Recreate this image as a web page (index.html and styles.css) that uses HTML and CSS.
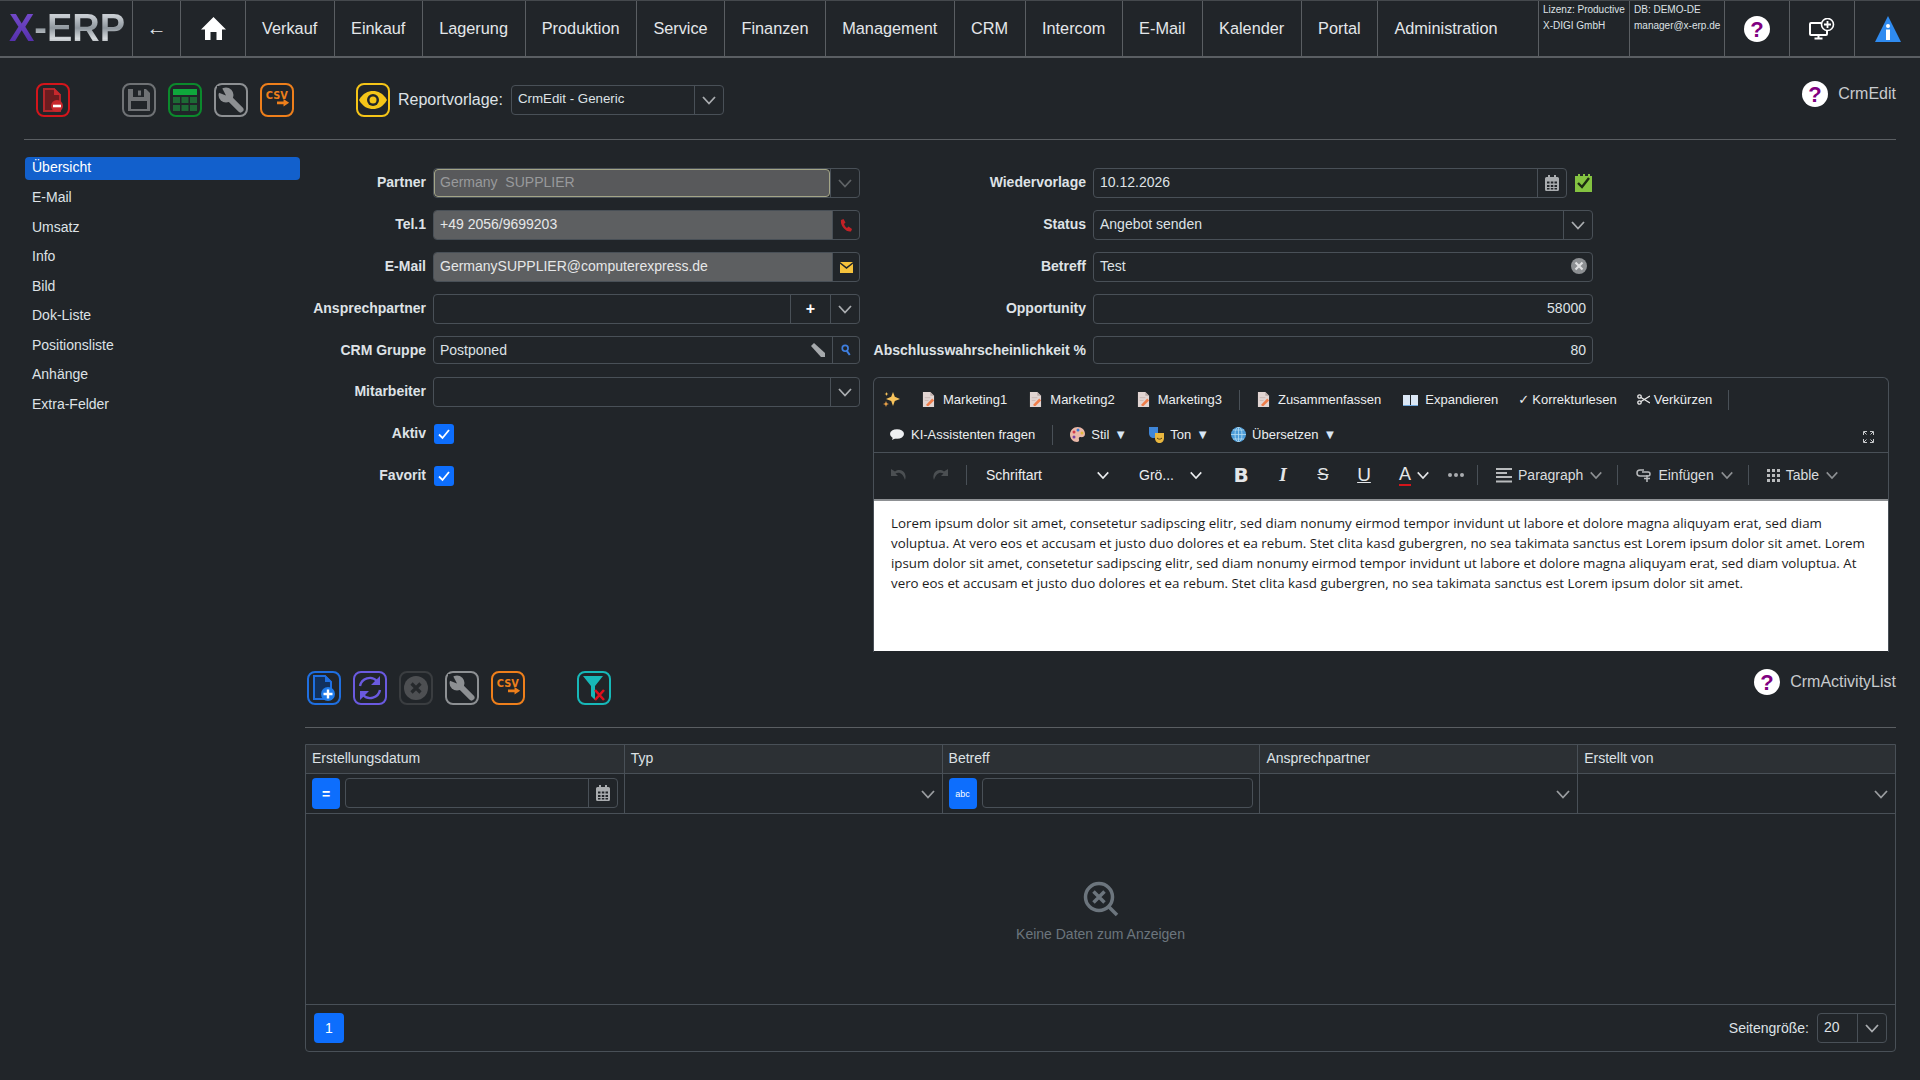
FILE: index.html
```html
<!DOCTYPE html>
<html lang="en">
<head>
  <meta charset="UTF-8" />
  <meta name="viewport" content="width=device-width, initial-scale=1.0"/>
  <title>X-ERP CrmEdit</title>
  <link rel="stylesheet" href="styles.css">
</head>
<body>

<!-- shared icons -->
<svg class="icon-defs" aria-hidden="true">
  <symbol id="chev" viewBox="0 0 16 16"><path d="M2 5l6 6.5L14 5" fill="none" stroke="currentColor" stroke-width="1.8"/></symbol>
  <symbol id="cal" viewBox="0 0 14 16"><path d="M3 0h2v2h4V0h2v2h1.5A1.5 1.5 0 0 1 14 3.5v11a1.5 1.5 0 0 1-1.5 1.5h-11A1.5 1.5 0 0 1 0 14.500v-11A1.500 1.500 0 0 1 1.500 2H3z" fill="currentColor"/><path d="M2 6.500h2.500v2H2zM5.800 6.500h2.500v2H5.800zM9.500 6.500H12v2H9.500zM2 10h2.500v2H2zM5.800 10h2.500v2H5.800zM9.500 10H12v2H9.500zM2 13h2.500v1.500H2zM5.800 13h2.500v1.500H5.800zM9.500 13H12v1.500H9.500z" fill="#212529"/></symbol>
  <symbol id="help" viewBox="0 0 26 26"><circle cx="13" cy="13" r="13" fill="#fff"/><text x="13" y="21" text-anchor="middle" class="help-mark">?</text></symbol>
  <symbol id="wrench" viewBox="0 0 28 28"><circle cx="9" cy="9" r="7.500" fill="currentColor"/><path d="M10 10L23.500 23.500" stroke="currentColor" stroke-width="6" stroke-linecap="round"/><path d="M9 9.500L4 0H-1v5.500z" fill="#212529"/></symbol>
  <symbol id="csv" viewBox="0 0 30 30"><text x="3" y="14" class="csv-mark">CSV</text><path d="M15 16.500h7V14l6 4-6 4v-2.500h-7z" fill="currentColor"/></symbol>
  <symbol id="doc" viewBox="0 0 14 16"><path d="M1 0h8l4 4v12H1z" fill="#e2d5d2"/><path d="M9 0l4 4H9z" fill="#b9aaa6"/><path d="M3 6h6M3 9h4" stroke="#c9b8b4"/><path d="M5 13l6-6 2 2-6 6H5z" fill="#ef7d4a"/></symbol>
</svg>

<header class="navbar">
  <a class="nav-logo"><span class="logo-x">X</span><span class="logo-rest">-ERP</span></a>
  <a class="nav-item nav-back">&larr;</a>
  <a class="nav-item nav-home">
    <svg width="25" height="23" viewBox="0 0 25 23"><path d="M12.500 0L25 12.500h-4V23h-5.500v-8h-6v8H4V12.500H0z" fill="#fff"/></svg>
  </a>
  <a class="nav-item">Verkauf</a>
  <a class="nav-item">Einkauf</a>
  <a class="nav-item">Lagerung</a>
  <a class="nav-item">Produktion</a>
  <a class="nav-item">Service</a>
  <a class="nav-item">Finanzen</a>
  <a class="nav-item">Management</a>
  <a class="nav-item">CRM</a>
  <a class="nav-item">Intercom</a>
  <a class="nav-item">E-Mail</a>
  <a class="nav-item nav-kalender">Kalender</a>
  <a class="nav-item">Portal</a>
  <a class="nav-item nav-grow">Administration</a>
  <div class="nav-info nav-licence">Lizenz: Productive<br>X-DIGI GmbH</div>
  <div class="nav-info nav-db">DB: DEMO-DE<br>manager@x-erp.de</div>
  <a class="nav-icon"><svg width="26" height="26"><use href="#help"/></svg></a>
  <a class="nav-icon">
    <svg width="26" height="22" viewBox="0 0 26 22"><path d="M12 5H2a1 1 0 0 0-1 1v10a1 1 0 0 0 1 1h15a1 1 0 0 0 1-1v-3" fill="none" stroke="#fff" stroke-width="2"/><path d="M9.500 17v3M5.500 20.500h8" stroke="#fff" stroke-width="2"/><circle cx="18.500" cy="6.500" r="6" fill="#212529" stroke="#fff" stroke-width="1.600"/><path d="M18.500 3v7M15 6.500h7" stroke="#fff" stroke-width="1.800"/></svg>
  </a>
  <a class="nav-icon nav-icon-last">
    <svg width="26" height="26" viewBox="0 0 26 26"><path d="M13 0L26 26H0z" fill="#2f8bf0"/><circle cx="13" cy="10" r="2" fill="#fff"/><path d="M11 13.500h4V24h-4z" fill="#fff"/></svg>
  </a>
</header>

<div class="page-toolbar">
  <a class="tool-btn tool-red">
    <svg width="24" height="26" viewBox="0 0 24 26"><path d="M3 2h10l6 6v16H3z" fill="#6d1c1f" stroke="#b3262b" stroke-width="2"/><path d="M13 1v7h7z" fill="#c9282d"/><circle cx="16" cy="19" r="6" fill="#c9282d"/><path d="M12 17.700h8v2.600h-8z" fill="#fff"/></svg>
  </a>
  <div class="tool-group">
    <a class="tool-btn tool-grey">
      <svg width="26" height="26" viewBox="0 0 26 26"><path d="M2 2h18l4 4v18H2z" fill="#6f7275"/><path d="M7 2h11v8H7z" fill="#212529"/><path d="M12 3.500h3v5h-3z" fill="#6f7275"/><path d="M5 14h16v8H5z" fill="#212529"/></svg>
    </a>
    <a class="tool-btn tool-green">
      <svg width="26" height="26" viewBox="0 0 26 26"><path d="M1 2h24v6H1z" fill="#0fa83c"/><path d="M1 10h7v6H1zM9.500 10h7v6h-7zM18 10h7v6h-7zM1 18h7v6H1zM9.500 18h7v6h-7zM18 18h7v6h-7z" fill="#1d6a35"/></svg>
    </a>
    <a class="tool-btn tool-silver"><svg width="28" height="28"><use href="#wrench"/></svg></a>
    <a class="tool-btn tool-orange"><svg width="28" height="28"><use href="#csv"/></svg></a>
  </div>
  <a class="tool-btn tool-yellow tool-eye">
    <svg width="28" height="20" viewBox="0 0 28 20"><path d="M0 10C4 3 9 1 14 1s10 2 14 9c-4 7-9 9-14 9S4 17 0 10z" fill="#f5c518"/><circle cx="14" cy="10" r="6" fill="#212529"/><circle cx="14" cy="10" r="3.500" fill="#f5c518"/></svg>
  </a>
  <label class="report-label">Reportvorlage:</label>
  <div class="report-select">
    <span class="report-value">CrmEdit - Generic</span>
    <span class="addon addon-chev"><svg width="16" height="16"><use href="#chev"/></svg></span>
  </div>
  <div class="help-link help-top">
    <svg width="26" height="26"><use href="#help"/></svg>
    <span>CrmEdit</span>
  </div>
</div>

<div class="content">
  <nav class="sidebar">
    <a class="side-item active">Übersicht</a>
    <a class="side-item">E-Mail</a>
    <a class="side-item">Umsatz</a>
    <a class="side-item">Info</a>
    <a class="side-item">Bild</a>
    <a class="side-item">Dok-Liste</a>
    <a class="side-item">Positionsliste</a>
    <a class="side-item">Anhänge</a>
    <a class="side-item">Extra-Felder</a>
  </nav>

  <main class="main">
    <section class="crm-form">
      <div class="form-left">
        <div class="row">
          <label>Partner</label>
          <div class="field">
            <span class="input input-partner">Germany&nbsp; SUPPLIER</span>
            <span class="addon addon-chev addon-dim"><svg width="16" height="16"><use href="#chev"/></svg></span>
          </div>
        </div>
        <div class="row">
          <label>Tel.1</label>
          <div class="field">
            <span class="input input-filled">+49 2056/9699203</span>
            <span class="addon">
              <svg width="12" height="13" viewBox="0 0 12 13"><path d="M1 1l2.500-1 2 3.500L4 5c.5 1.500 1.500 3 3 4l1.500-1.500L12 10l-1 2.500C6 13.500 0 7 1 1z" fill="#c42126"/></svg>
            </span>
          </div>
        </div>
        <div class="row">
          <label>E-Mail</label>
          <div class="field">
            <span class="input input-filled">GermanySUPPLIER@computerexpress.de</span>
            <span class="addon">
              <svg width="13" height="11" viewBox="0 0 13 11"><path d="M0 0h13L6.500 5z" fill="#f5c23c"/><path d="M0 1.800L6.500 7 13 1.800V11H0z" fill="#f5c23c"/></svg>
            </span>
          </div>
        </div>
        <div class="row">
          <label>Ansprechpartner</label>
          <div class="field">
            <span class="input"></span>
            <span class="addon addon-plus">+</span>
            <span class="addon addon-chev"><svg width="16" height="16"><use href="#chev"/></svg></span>
          </div>
        </div>
        <div class="row row-short">
          <label>CRM Gruppe</label>
          <div class="field field-short">
            <span class="input">Postponed
              <svg class="eraser" width="14" height="14" viewBox="0 0 14 14"><path d="M3 0l11 10v4h-4L0 3z" fill="#a6a9ac"/></svg>
            </span>
            <span class="addon">
              <svg width="10" height="12" viewBox="0 0 12 14"><circle cx="5" cy="5" r="3.500" fill="none" stroke="#3f7fe0" stroke-width="2"/><path d="M7 8l3.500 5" stroke="#3f7fe0" stroke-width="2.400"/></svg>
            </span>
          </div>
        </div>
        <div class="row">
          <label>Mitarbeiter</label>
          <div class="field">
            <span class="input"></span>
            <span class="addon addon-chev"><svg width="16" height="16"><use href="#chev"/></svg></span>
          </div>
        </div>
        <div class="row">
          <label>Aktiv</label>
          <span class="checkbox"><svg width="14" height="14" viewBox="0 0 14 14"><path d="M2 7.500L5.500 11 12 3" fill="none" stroke="#fff" stroke-width="1.800"/></svg></span>
        </div>
        <div class="row">
          <label>Favorit</label>
          <span class="checkbox"><svg width="14" height="14" viewBox="0 0 14 14"><path d="M2 7.500L5.500 11 12 3" fill="none" stroke="#fff" stroke-width="1.800"/></svg></span>
        </div>
      </div>

      <div class="form-right">
        <div class="row-wide">
          <label>Wiedervorlage</label>
          <div class="field field-date">
            <span class="input">10.12.2026</span>
            <span class="addon addon-cal"><svg width="14" height="16"><use href="#cal"/></svg></span>
          </div>
          <svg class="date-check" width="17" height="18" viewBox="0 0 17 18"><path d="M0 2h17v16H0z" fill="#84c341"/><path d="M3 0h2v3H3zM8 0h2v3H8zM13 0h2v3h-2z" fill="#84c341"/><path d="M3 9l4 4 7-9" fill="none" stroke="#1c2a12" stroke-width="2.400"/></svg>
        </div>
        <div class="row-wide">
          <label>Status</label>
          <div class="field field-wide">
            <span class="input">Angebot senden</span>
            <span class="addon addon-chev"><svg width="16" height="16"><use href="#chev"/></svg></span>
          </div>
        </div>
        <div class="row-wide">
          <label>Betreff</label>
          <div class="field field-wide">
            <span class="input">Test
              <svg class="clear-x" width="16" height="16" viewBox="0 0 16 16"><circle cx="8" cy="8" r="8" fill="#8d9093"/><path d="M4.500 4.500l7 7M11.500 4.500l-7 7" stroke="#dfe0e1" stroke-width="2.200"/></svg>
            </span>
          </div>
        </div>
        <div class="row-wide">
          <label>Opportunity</label>
          <div class="field field-wide"><span class="input input-num">58000</span></div>
        </div>
        <div class="row-wide row-short">
          <label>Abschlusswahrscheinlichkeit %</label>
          <div class="field field-wide field-short"><span class="input input-num">80</span></div>
        </div>

        <div class="editor">
          <div class="ai-toolbar">
            <div class="ai-row">
              <svg class="ai-sparkle" width="17" height="17" viewBox="0 0 17 17"><path d="M10 1l1.800 4.700L17 8l-5.200 2L10 15l-1.800-5L3 8l5.200-2.300z" fill="#f7c35c"/><path d="M3 10l.8 2.200L6 13l-2.200.8L3 16l-.8-2.200L0 13l2.200-.8z" fill="#f3a74a"/><path d="M3.500 1l.6 1.400L5.500 3l-1.400.6L3.500 5l-.6-1.400L1.500 3l1.400-.6z" fill="#f7c35c"/></svg>
              <a class="ai-btn"><svg width="13" height="15"><use href="#doc"/></svg>Marketing1</a>
              <a class="ai-btn"><svg width="13" height="15"><use href="#doc"/></svg>Marketing2</a>
              <a class="ai-btn"><svg width="13" height="15"><use href="#doc"/></svg>Marketing3</a>
              <span class="ai-sep"></span>
              <a class="ai-btn"><svg width="13" height="15"><use href="#doc"/></svg>Zusammenfassen</a>
              <a class="ai-btn ai-book">
                <svg width="15" height="12" viewBox="0 0 15 12"><path d="M0 1h7v10H0zM8 1h7v10H8z" fill="#dbe7f5"/><path d="M0 11h15v1H0z" fill="#6fa7dc"/></svg>Expandieren</a>
              <a class="ai-btn ai-tight"><span class="ai-glyph">✓</span>Korrekturlesen</a>
              <a class="ai-btn ai-tight">
                <svg width="13" height="11" viewBox="0 0 13 11"><circle cx="2.500" cy="2.500" r="1.700" fill="none" stroke="#e8e8e8" stroke-width="1.300"/><circle cx="2.500" cy="8.500" r="1.700" fill="none" stroke="#e8e8e8" stroke-width="1.300"/><path d="M4 3.500L13 9M4 7.500L13 2" stroke="#e8e8e8" stroke-width="1.400"/></svg>Verkürzen</a>
              <span class="ai-sep"></span>
            </div>
            <div class="ai-row">
              <a class="ai-btn ai-first">
                <svg width="14" height="11" viewBox="0 0 14 11"><ellipse cx="7" cy="5" rx="7" ry="4.800" fill="#eef0f2"/><path d="M3 8l-1 3 4-2z" fill="#eef0f2"/></svg>KI-Assistenten fragen</a>
              <span class="ai-sep"></span>
              <a class="ai-btn ai-menu">
                <svg width="15" height="15" viewBox="0 0 15 15"><path d="M7.500 0C12 0 15 3 15 7c0 3-3 3.500-4.500 3-1.500-.3-2 1-1.500 2.500.5 1.500-.5 2.500-2 2.500C3 15 0 11.500 0 7.500S3.500 0 7.500 0z" fill="#eab8a8"/><circle cx="4" cy="5" r="1.500" fill="#d33a4a"/><circle cx="8" cy="3" r="1.500" fill="#3a7bd5"/><circle cx="12" cy="6" r="1.500" fill="#e2b93b"/><circle cx="4" cy="10" r="1.500" fill="#7a3fa0"/></svg>Stil <span class="tri">▼</span></a>
              <a class="ai-btn ai-menu">
                <svg width="15" height="16" viewBox="0 0 15 16"><path d="M0 0h9v6c0 3-2 5-4.500 5S0 9 0 6z" fill="#3f86d8"/><path d="M6 6h9v5c0 3-2 5-4.500 5S6 14 6 11z" fill="#e9b73f"/><path d="M8 11c1.500 1.500 3.500 1.500 5 0" stroke="#5a3f10" fill="none"/></svg>Ton <span class="tri">▼</span></a>
              <a class="ai-btn ai-menu">
                <svg width="15" height="15" viewBox="0 0 15 15"><circle cx="7.500" cy="7.500" r="7.500" fill="#4b9bd8"/><path d="M0 7.500h15M7.500 0v15M2 3h11M2 12h11" stroke="#b4daf0" stroke-width=".8"/><ellipse cx="7.500" cy="7.500" rx="3.500" ry="7.500" fill="none" stroke="#b4daf0" stroke-width=".8"/></svg>Übersetzen <span class="tri">▼</span></a>
              <svg class="ai-expand" width="11" height="12" viewBox="0 0 11 12"><path d="M4 .5H.5V4M7 .5h3.500V4M4 11.500H.5V8M7 11.500h3.500V8" fill="none" stroke="#c8cacc"/><path d="M1 1l2.500 2.500M10 1L7.500 3.500M1 11l2.500-2.500M10 11L7.500 8.500" stroke="#c8cacc"/></svg>
            </div>
          </div>

          <div class="ck-toolbar">
            <svg class="ck-dim" width="16" height="12" viewBox="0 0 16 12"><path d="M0 0v7h7L4.500 4.500C8 2.500 12 4 14 11c2-5-1-11-7-10-1 .1-2 .6-3 1.500z" fill="#4b4f52"/></svg>
            <svg class="ck-dim ck-redo" width="16" height="12" viewBox="0 0 16 12"><path d="M16 0v7H9l2.500-2.500C8 2.500 4 4 2 11 0 6 3 0 9 1c1 .1 2 .6 3 1.500z" fill="#4b4f52"/></svg>
            <span class="ck-sep"></span>
            <span class="ck-drop ck-font">Schriftart <svg width="14" height="14"><use href="#chev"/></svg></span>
            <span class="ck-drop ck-size">Grö... <svg width="14" height="14"><use href="#chev"/></svg></span>
            <span class="ck-fmt ck-b">B</span>
            <span class="ck-fmt ck-i">I</span>
            <span class="ck-fmt ck-s">S</span>
            <span class="ck-fmt ck-u">U</span>
            <span class="ck-color"><span class="ck-a">A</span><svg width="14" height="14"><use href="#chev"/></svg></span>
            <span class="ck-dots"><i></i><i></i><i></i></span>
            <span class="ck-sep"></span>
            <span class="ck-menu">
              <svg width="16" height="15" viewBox="0 0 16 15"><path d="M0 0h16v2H0zM0 4h11v2H0zM0 8h16v2H0zM0 12.500h16v2H0z" fill="#b9bbbd"/></svg>Paragraph <svg class="ck-chev" width="14" height="14"><use href="#chev"/></svg>
            </span>
            <span class="ck-sep"></span>
            <span class="ck-menu">
              <svg width="16" height="14" viewBox="0 0 16 14"><path d="M8 2H4a3 3 0 0 0 0 6h8a2 2 0 0 0 0-4H6" fill="none" stroke="#b9bbbd" stroke-width="1.500"/><path d="M11 7v7M8 10.500h6" stroke="#b9bbbd" stroke-width="1.500"/></svg>Einfügen <svg class="ck-chev" width="14" height="14"><use href="#chev"/></svg>
            </span>
            <span class="ck-sep"></span>
            <span class="ck-menu">
              <svg width="13" height="13" viewBox="0 0 13 13"><path d="M0 0h3v3H0zM5 0h3v3H5zM10 0h3v3h-3zM0 5h3v3H0zM5 5h3v3H5zM10 5h3v3h-3zM0 10h3v3H0zM5 10h3v3H5zM10 10h3v3h-3z" fill="#b9bbbd"/></svg>Table <svg class="ck-chev" width="14" height="14"><use href="#chev"/></svg>
            </span>
          </div>

          <div class="editor-body">
            <p>Lorem ipsum dolor sit amet, consetetur sadipscing elitr, sed diam nonumy eirmod tempor invidunt ut labore et dolore magna aliquyam erat, sed diam voluptua. At vero eos et accusam et justo duo dolores et ea rebum. Stet clita kasd gubergren, no sea takimata sanctus est Lorem ipsum dolor sit amet. Lorem ipsum dolor sit amet, consetetur sadipscing elitr, sed diam nonumy eirmod tempor invidunt ut labore et dolore magna aliquyam erat, sed diam voluptua. At vero eos et accusam et justo duo dolores et ea rebum. Stet clita kasd gubergren, no sea takimata sanctus est Lorem ipsum dolor sit amet.</p>
          </div>
        </div>
      </div>
    </section>

    <div class="list-toolbar">
      <a class="tool-btn tool-blue">
        <svg width="26" height="28" viewBox="0 0 26 28"><path d="M3 2h11l6 6v17H3z" fill="#12315c" stroke="#1f6fe0" stroke-width="2"/><path d="M14 1v7h7z" fill="#1f6fe0"/><circle cx="17" cy="20" r="7" fill="#1f7bea"/><path d="M17 15.500v9M12.500 20h9" stroke="#fff" stroke-width="2.400"/></svg>
      </a>
      <a class="tool-btn tool-purple">
        <svg width="28" height="28" viewBox="0 0 28 28"><path d="M4 12A10 10 0 0 1 21 7" fill="none" stroke="#6a5ae0" stroke-width="2.400"/><path d="M24 16A10 10 0 0 1 7 21" fill="none" stroke="#6a5ae0" stroke-width="2.400"/><path d="M24 2v9h-9zM4 26v-9h9z" fill="#6a5ae0"/></svg>
      </a>
      <a class="tool-btn tool-dark">
        <svg width="26" height="26" viewBox="0 0 26 26"><circle cx="13" cy="13" r="12" fill="#4d4f52"/><path d="M8.500 8.500l9 9M17.500 8.500l-9 9" stroke="#26292c" stroke-width="3.200"/></svg>
      </a>
      <a class="tool-btn tool-silver"><svg width="28" height="28"><use href="#wrench"/></svg></a>
      <a class="tool-btn tool-orange"><svg width="28" height="28"><use href="#csv"/></svg></a>
      <a class="tool-btn tool-teal tool-filter">
        <svg width="26" height="28" viewBox="0 0 26 28"><path d="M2 2h20l-8 10v14l-4-4V12z" fill="#17b8b8"/><path d="M14 16l9 10M23 16l-9 10" stroke="#e0101c" stroke-width="2.600"/></svg>
      </a>
      <div class="help-link help-list">
        <svg width="26" height="26"><use href="#help"/></svg>
        <span>CrmActivityList</span>
      </div>
    </div>

    <section class="grid">
      <div class="grid-head">
        <div>Erstellungsdatum</div>
        <div>Typ</div>
        <div>Betreff</div>
        <div>Ansprechpartner</div>
        <div>Erstellt von</div>
      </div>
      <div class="grid-filter">
        <div class="filter-cell">
          <span class="op-btn op-eq">=</span>
          <div class="field filter-field">
            <span class="input"></span>
            <span class="addon addon-cal"><svg width="14" height="16"><use href="#cal"/></svg></span>
          </div>
        </div>
        <div class="filter-cell filter-drop"><svg width="16" height="16"><use href="#chev"/></svg></div>
        <div class="filter-cell">
          <span class="op-btn op-abc">abc</span>
          <div class="field filter-field"><span class="input"></span></div>
        </div>
        <div class="filter-cell filter-drop"><svg width="16" height="16"><use href="#chev"/></svg></div>
        <div class="filter-cell filter-drop"><svg width="16" height="16"><use href="#chev"/></svg></div>
      </div>
      <div class="grid-empty">
        <svg width="36" height="36" viewBox="0 0 36 36"><circle cx="16" cy="16" r="13.500" fill="none" stroke="#6c757d" stroke-width="3.500"/><path d="M10.500 10.500l11 11M21.500 10.500l-11 11" stroke="#6c757d" stroke-width="3.500"/><path d="M26 26l8 8" stroke="#6c757d" stroke-width="3.500"/></svg>
        <span>Keine Daten zum Anzeigen</span>
      </div>
      <div class="grid-foot">
        <a class="page-btn">1</a>
        <div class="page-size">
          <span>Seitengröße:</span>
          <div class="field page-select">
            <span class="input">20</span>
            <span class="addon addon-chev"><svg width="16" height="16"><use href="#chev"/></svg></span>
          </div>
        </div>
      </div>
    </section>
  </main>
</div>

</body>
</html>
```

FILE: styles.css
```css
* {
  box-sizing: border-box;
}

body {
  margin: 0;
  background: #212529;
  color: #dee2e6;
  font-family: "Liberation Sans", Arial, sans-serif;
  font-size: 14px;
}

.icon-defs {
  display: none;
}

.help-mark {
  font: bold 22px "Liberation Sans", sans-serif;
  fill: #800080;
}

.csv-mark {
  font: bold 10.500px "DejaVu Sans", sans-serif;
  fill: currentColor;
}

/* top bar */
.navbar {
  display: flex;
  height: 58px;
  border-top: 1px solid #45494d;
  border-bottom: 2px solid #5a5e62;
}

.nav-logo {
  width: 132px;
  padding-left: 9px;
  font-size: 38px;
  font-weight: bold;
  line-height: 55px;
}

.logo-x {
  background: linear-gradient(#7a4fd0, #4d2aa5);
  -webkit-background-clip: text;
  background-clip: text;
  color: transparent;
}

.logo-rest {
  background: linear-gradient(#c9ced3 20%, #8f979e 50%, #d5d9dc 75%, #7f868c);
  -webkit-background-clip: text;
  background-clip: text;
  color: transparent;
}

.nav-item {
  display: flex;
  align-items: center;
  padding: 0 16.800px 0 16px;
  border-left: 1px solid #5a5e62;
  font-size: 16.300px;
  color: #e4e7ea;
}

.nav-back {
  width: 48px;
  justify-content: center;
  padding: 0;
  font-size: 20px;
}

.nav-home {
  width: 65px;
  justify-content: center;
  padding: 0;
}

.nav-kalender {
  width: 99px;
}

.nav-grow {
  flex: 1;
}

.nav-info {
  width: 91px;
  padding: 1px 0 0 4px;
  border-left: 1px solid #5a5e62;
  font-size: 10px;
  line-height: 16px;
}

.nav-db {
  width: 95px;
}

.nav-icon {
  display: flex;
  align-items: center;
  justify-content: center;
  width: 65px;
  border-left: 1px solid #5a5e62;
}

.nav-icon-last {
  width: 66px;
}

/* page toolbar */
.page-toolbar {
  display: flex;
  align-items: flex-start;
  height: 82px;
  margin: 0 24px;
  padding: 25px 0 0 12px;
  border-bottom: 1px solid #5a5e62;
}

.tool-btn {
  display: flex;
  align-items: center;
  justify-content: center;
  flex: none;
  width: 34px;
  height: 34px;
  border: 2px solid currentColor;
  border-radius: 8px;
}

.tool-red { color: #d3151b; }
.tool-grey { color: #6f7275; }
.tool-green { color: #0b8a2c; }
.tool-silver { color: #8d9093; }
.tool-orange { color: #ee7f1b; }
.tool-yellow { color: #f5c518; }
.tool-blue { color: #1f6fe0; }
.tool-purple { color: #6a5ae0; }
.tool-dark { color: #3a3d40; }
.tool-teal { color: #17b8b8; }

.tool-group {
  display: flex;
  gap: 12px;
  margin-left: 52px;
}

.tool-eye {
  margin-left: 62px;
}

.report-label {
  margin-left: 8px;
  font-size: 16px;
  line-height: 34px;
}

.report-select {
  display: flex;
  width: 213px;
  height: 30px;
  margin: 2px 0 0 8px;
  border: 1px solid #495057;
  border-radius: 4px;
}

.report-value {
  flex: 1;
  padding-left: 6px;
  font-size: 13.300px;
  line-height: 26px;
}

.help-link {
  display: flex;
  align-items: center;
  gap: 10px;
  margin-left: auto;
  font-size: 16px;
  color: #c8cbce;
}

.help-top {
  margin-top: -2px;
}

/* layout */
.content {
  display: grid;
  grid-template-columns: 280px 1fr;
  margin-left: 25px;
}

.sidebar {
  width: 275px;
  padding-top: 17px;
}

.side-item {
  display: block;
  height: 29.5px;
  padding-left: 7px;
  line-height: 20px;
}

.side-item.active {
  height: 23px;
  margin-bottom: 7px;
  background: #1260cc;
  border-radius: 4px;
  color: #fff;
}

.main {
  padding: 28px 24px 0 0;
}

.crm-form {
  display: flex;
  gap: 14px;
}

.form-left {
  width: 554px;
  flex: none;
}

.form-right {
  width: 1016px;
  flex: none;
}

/* form rows */
.row {
  display: grid;
  grid-template-columns: 121px 427px;
  gap: 7px;
  height: 42px;
  align-items: start;
}

.row-wide {
  display: flex;
  gap: 7px;
  height: 42px;
}

.row-short {
  height: 41px;
}

.row label,
.row-wide label {
  font-weight: bold;
  text-align: right;
  white-space: nowrap;
  line-height: 28px;
}

.row-wide label {
  width: 213px;
  flex: none;
}

.field {
  display: flex;
  height: 30px;
  border: 1px solid #495057;
  border-radius: 4px;
  overflow: hidden;
}

.field-short {
  height: 28px;
}

.field-date {
  width: 474px;
}

.field-wide {
  width: 500px;
}

.input {
  display: flex;
  align-items: center;
  flex: 1;
  min-width: 0;
  padding: 0 6px 2px;
  color: #dee2e6;
}

.field-short .input {
  padding-bottom: 0;
}

.input-filled {
  background: #5d5f61;
  color: #e6e7e8;
}

.input-partner {
  background: #58595b;
  border: 1px solid #a3a587;
  border-radius: 4px;
  padding-left: 5px;
  color: #989a9c;
}

.input-num {
  justify-content: flex-end;
}

.addon {
  display: flex;
  align-items: center;
  justify-content: center;
  flex: none;
  width: 27px;
  border-left: 1px solid #495057;
}

.addon-chev {
  width: 29px;
  color: #a9acaf;
}

.addon-dim {
  color: #5f6366;
}

.addon-plus {
  width: 40px;
  font-size: 16px;
  font-weight: bold;
  color: #fff;
}

.addon-cal {
  width: 29px;
  color: #a9acaf;
}

.eraser,
.clear-x {
  margin-left: auto;
}

.eraser {
  margin-right: 1px;
}

.clear-x {
  margin-right: -1px;
}

.checkbox {
  display: flex;
  align-items: center;
  justify-content: center;
  width: 20px;
  height: 20px;
  margin: 5px 0 0 1px;
  background: #0d6efd;
  border-radius: 3px;
}

.date-check {
  margin: 6px 0 0 1px;
}

/* editor */
.editor {
  height: 275px;
  border: 1px solid #495057;
  border-bottom: 0;
  border-radius: 6px 6px 0 0;
  font-size: 13px;
}

.ai-toolbar {
  height: 75px;
  padding: 4px 0 0 9px;
  border-bottom: 1px solid #495057;
}

.ai-row {
  display: flex;
  align-items: center;
  height: 35px;
}

.ai-sparkle {
  margin-right: 11px;
}

.ai-btn {
  display: flex;
  align-items: center;
  gap: 8px;
  padding: 0 11px;
  white-space: nowrap;
  color: #eceef0;
}

.ai-book {
  gap: 7px;
  padding-right: 10px;
}

.ai-tight {
  padding: 0 10px;
  gap: 4px;
}

.ai-first {
  padding-left: 7px;
  gap: 7px;
}

.ai-menu {
  gap: 6px;
}

.ai-glyph {
  font-family: "DejaVu Sans", sans-serif;
  width: 10px;
}

.ai-sep {
  width: 1px;
  height: 20px;
  margin: 0 6px;
  background: #495057;
}

.tri {
  margin-left: -1px;
  font-size: 13px;
  color: #d7e6f5;
}

.ai-expand {
  margin-left: auto;
  margin-right: 14px;
  margin-top: 5px;
}

.ck-toolbar {
  display: flex;
  align-items: center;
  height: 48px;
  padding: 0 0 2px 17px;
  border-bottom: 2px solid #8d9093;
  font-size: 14px;
  color: #e4e6e8;
}

.ck-dim {
  flex: none;
}

.ck-redo {
  margin-left: 25px;
}

.ck-sep {
  width: 1px;
  height: 20px;
  margin: 0 18px;
  background: #495057;
}

.ck-drop {
  display: flex;
  align-items: center;
  justify-content: space-between;
  color: #eceef0;
}

.ck-font {
  width: 124px;
  margin-left: 1px;
}

.ck-size {
  width: 64px;
  margin-left: 29px;
}

.ck-fmt {
  width: 16px;
  text-align: center;
  line-height: 20px;
}

.ck-b {
  margin-left: 30px;
  font: bold 20px "DejaVu Sans", sans-serif;
}

.ck-i {
  margin-left: 26px;
  font: italic bold 19px "Liberation Serif", serif;
}

.ck-s {
  margin-left: 24px;
  font-size: 17px;
  text-decoration: line-through;
}

.ck-u {
  margin-left: 25px;
  font-size: 19px;
  text-decoration: underline;
}

.ck-color {
  display: flex;
  align-items: center;
  gap: 5px;
  margin-left: 27px;
}

.ck-a {
  font-size: 18px;
  line-height: 20px;
  border-bottom: 2px solid #d3151b;
}

.ck-dots {
  display: flex;
  gap: 2px;
  margin: 0 -5px 0 18px;
}

.ck-dots i {
  width: 4px;
  height: 4px;
  background: #a9acaf;
  border-radius: 50%;
}

.ck-menu {
  display: flex;
  align-items: center;
  gap: 6px;
  margin-right: -4px;
  color: #dadcde;
}

.ck-chev {
  color: #8d9093;
}

.editor-body {
  height: 150px;
  padding: 12px 17px;
  background: #fff;
  color: #1c1c1c;
  font-family: "Open Sans", sans-serif;
  font-size: 13.330px;
  line-height: 20px;
}

.editor-body p {
  margin: 0;
}

/* activity list */
.list-toolbar {
  display: flex;
  align-items: flex-start;
  gap: 12px;
  height: 57px;
  margin-top: 19px;
  padding-left: 2px;
  border-bottom: 1px solid #5a5e62;
}

.tool-filter {
  margin-left: 40px;
}

.help-list {
  margin-top: -2px;
}

.grid {
  display: flex;
  flex-direction: column;
  height: 308px;
  margin-top: 16px;
  border: 1px solid #495057;
  border-radius: 0 0 4px 4px;
}

.grid-head,
.grid-filter {
  display: grid;
  grid-template-columns: repeat(5, 1fr);
  border-bottom: 1px solid #495057;
}

.grid-head {
  height: 29px;
  background: #2c3034;
  line-height: 27px;
}

.grid-head div {
  padding-left: 6px;
  border-left: 1px solid #495057;
}

.grid-head div:first-child,
.filter-cell:first-child {
  border-left: 0;
}

.grid-filter {
  height: 40px;
}

.filter-cell {
  display: flex;
  gap: 5px;
  padding: 4px 6px;
  border-left: 1px solid #495057;
}

.filter-drop {
  justify-content: flex-end;
  align-items: center;
  padding-right: 6px;
  color: #9a9da0;
}

.filter-field {
  flex: 1;
}

.op-btn {
  display: flex;
  align-items: center;
  justify-content: center;
  width: 28px;
  height: 31px;
  background: #0d6efd;
  border-radius: 4px;
  color: #fff;
  font-weight: bold;
}

.op-abc {
  font-size: 9px;
  font-weight: normal;
}

.grid-empty {
  display: flex;
  flex-direction: column;
  align-items: center;
  flex: 1;
  gap: 9px;
  padding-top: 67px;
  color: #6c757d;
}

.grid-foot {
  display: flex;
  align-items: flex-start;
  justify-content: space-between;
  height: 47px;
  padding: 8px 8px 0 8px;
  border-top: 1px solid #495057;
}

.page-btn {
  display: flex;
  align-items: center;
  justify-content: center;
  width: 30px;
  height: 30px;
  background: #0d6efd;
  border-radius: 4px;
  color: #fff;
}

.page-size {
  display: flex;
  align-items: center;
  gap: 8px;
}

.page-select {
  width: 70px;
}
```
